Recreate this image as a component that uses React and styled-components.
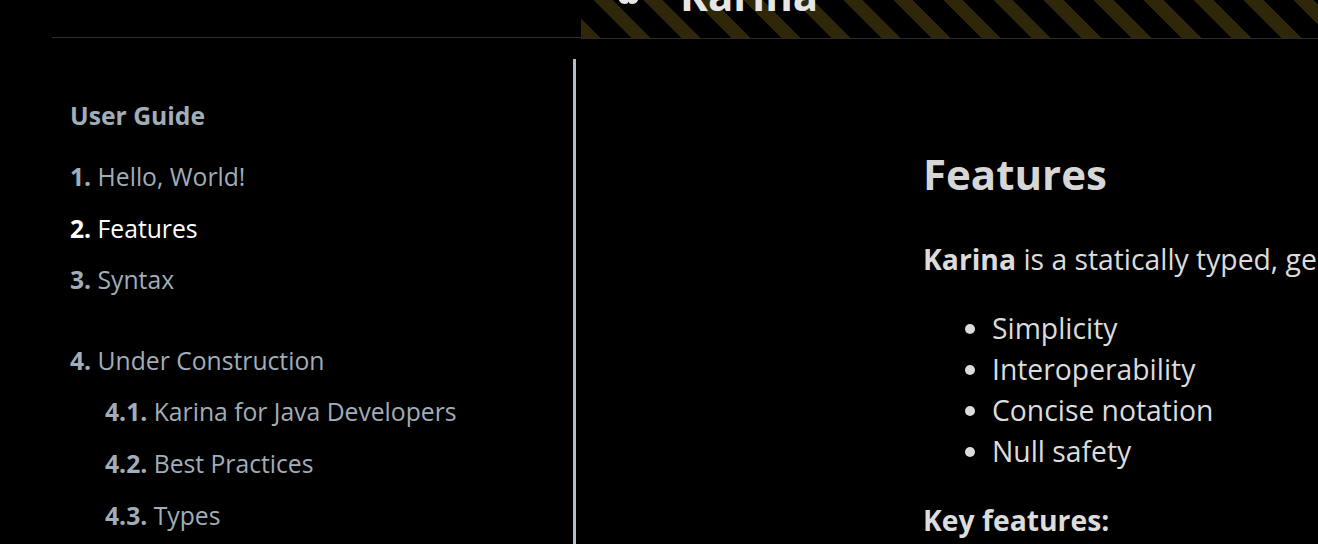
import React from "react";
import styled, { createGlobalStyle } from "styled-components";

const Global = createGlobalStyle`
  html, body { margin: 0; padding: 0; background: #000; }
  body { overflow: hidden; width: 1318px; height: 544px; font-family: "Open Sans", "Noto Sans", sans-serif; }
  * { box-sizing: border-box; }
`;

const Page = styled.div`
  width: 1318px;
  height: 544px;
  background: #000;
  overflow: hidden;
  display: flex;
  flex-direction: column;
`;

const TopBar = styled.div`
  display: flex;
  height: 39px;
  flex: none;
`;

const TopLeft = styled.div`
  width: 581px;
  padding-left: 52px;
  flex: none;
`;

const TopLeftLine = styled.div`
  height: 38px;
  border-bottom: 1px solid #2e2e2e;
`;

const Striped = styled.div`
  flex: 1;
  height: 39px;
  border-bottom: 1px solid #2a2a30;
  background: repeating-linear-gradient(
    45deg,
    #2e2709 0px,
    #2e2709 14.1px,
    #000 14.1px,
    #000 35.36px
  );
  display: flex;
  align-items: flex-start;
  overflow: hidden;
`;

const MenuIcon = styled.svg`
  margin-left: 37px;
  margin-top: -1px;
  flex: none;
`;

const BookTitle = styled.h1`
  margin: -36px 0 0 41px;
  font-size: 42px;
  line-height: 61px;
  font-weight: 700;
  color: #e6e6e6;
  white-space: nowrap;
`;

const Body = styled.div`
  flex: 1;
  display: flex;
  min-height: 0;
`;

const Sidebar = styled.nav`
  width: 573px;
  flex: none;
  padding: 58px 0 0 70px;
  font-size: 24.7px;
  color: #a1adb8;
`;

const PartTitle = styled.div`
  font-weight: 700;
  line-height: 37px;
  margin-bottom: 24px;
`;

const Chapters = styled.ol`
  list-style: none;
  margin: 0;
  padding: 0;
`;

const Chapter = styled.li`
  line-height: 37px;
  margin-top: 14.7px;
  padding-left: ${(p) => (p.$depth ? p.$depth * 35 : 0)}px;
  color: ${(p) => (p.$active ? "#ffffff" : "#a1adb8")};
  white-space: nowrap;
  strong { font-weight: 700; }
`;

const Spacer = styled.li`
  height: 14px;
  margin-top: 14.7px;
`;

const Divider = styled.div`
  width: 3px;
  margin-top: 20px;
  background: #b4bcc8;
  flex: none;
`;

const Content = styled.main`
  flex: 1;
  padding: 104px 0 0 347px;
  overflow: hidden;
  color: #dcdcdc;
  font-size: 28.3px;
  line-height: 41px;
`;

const Heading = styled.h1`
  margin: 0 0 35px;
  font-size: 42px;
  line-height: 61px;
  font-weight: 700;
  color: #d6d6d6;
`;

const Para = styled.p`
  margin: 0 0 28px;
  white-space: nowrap;
  b { font-weight: 700; }
`;

const List = styled.ul`
  margin: 0 0 28px;
  padding-left: 69px;
  list-style: disc;
  li { white-space: nowrap; }
`;

const SubHeading = styled.p`
  margin: 0;
  font-weight: 700;
  white-space: nowrap;
`;

const chapters = [
  { num: "1.", title: "Hello, World!" },
  { num: "2.", title: "Features", active: true },
  { num: "3.", title: "Syntax" },
  { spacer: true },
  { num: "4.", title: "Under Construction" },
  { num: "4.1.", title: "Karina for Java Developers", depth: 1 },
  { num: "4.2.", title: "Best Practices", depth: 1 },
  { num: "4.3.", title: "Types", depth: 1 },
];

export default function App() {
  return (
    <Page>
      <Global />
      <TopBar>
        <TopLeft>
          <TopLeftLine />
        </TopLeft>
        <Striped>
          <MenuIcon width="21" height="6" viewBox="0 0 20 6">
            <path d="M0 0 Q1.5 5 6.5 5 Q9.5 5 10 2.5 Q10.5 5 13.5 5 Q18.5 5 20 0 Z" fill="#e6e6e6" />
          </MenuIcon>
          <BookTitle>Karina</BookTitle>
        </Striped>
      </TopBar>
      <Body>
        <Sidebar>
          <PartTitle>User Guide</PartTitle>
          <Chapters>
            {chapters.map((c, i) =>
              c.spacer ? (
                <Spacer key={i} />
              ) : (
                <Chapter key={i} $active={c.active} $depth={c.depth}>
                  <strong>{c.num}</strong> {c.title}
                </Chapter>
              )
            )}
          </Chapters>
        </Sidebar>
        <Divider />
        <Content>
          <Heading>Features</Heading>
          <Para>
            <b>Karina</b> is a statically typed, general-purpose programming language
          </Para>
          <List>
            <li>Simplicity</li>
            <li>Interoperability</li>
            <li>Concise notation</li>
            <li>Null safety</li>
          </List>
          <SubHeading>Key features:</SubHeading>
        </Content>
      </Body>
    </Page>
  );
}
